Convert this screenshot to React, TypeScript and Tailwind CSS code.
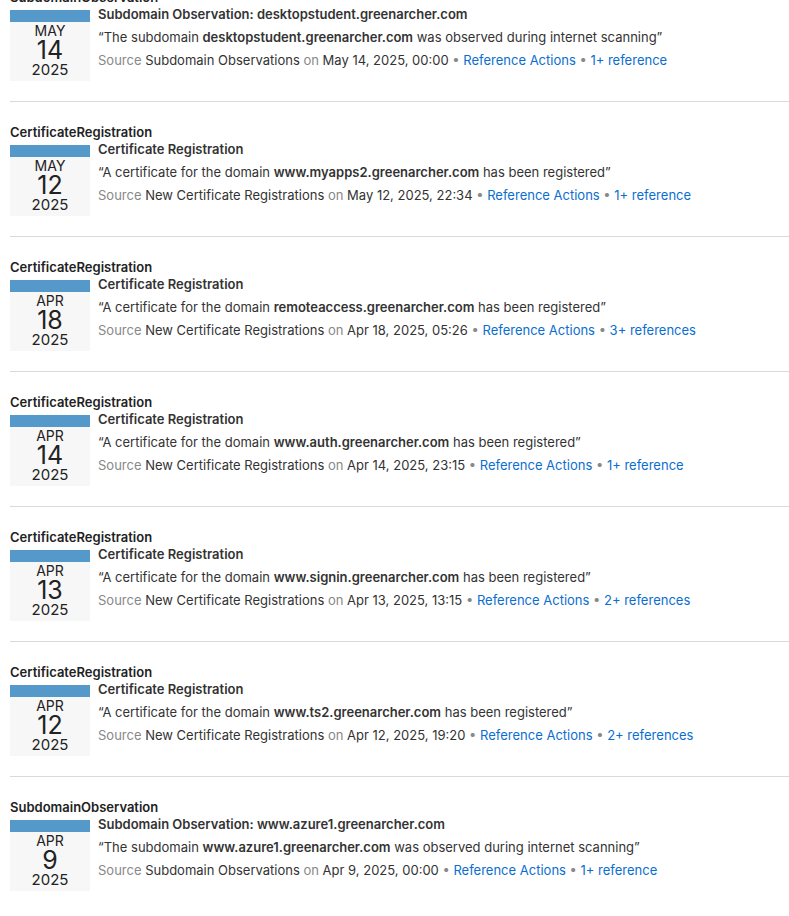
import React from "react";

type Item = {
  kind: "SubdomainObservation" | "CertificateRegistration";
  month: string;
  day: string;
  domain: string;
  date: string;
  refs: string;
};

const ITEMS: Item[] = [
  { kind: "SubdomainObservation", month: "MAY", day: "14", domain: "desktopstudent.greenarcher.com", date: "May 14, 2025, 00:00", refs: "1+ reference" },
  { kind: "CertificateRegistration", month: "MAY", day: "12", domain: "www.myapps2.greenarcher.com", date: "May 12, 2025, 22:34", refs: "1+ reference" },
  { kind: "CertificateRegistration", month: "APR", day: "18", domain: "remoteaccess.greenarcher.com", date: "Apr 18, 2025, 05:26", refs: "3+ references" },
  { kind: "CertificateRegistration", month: "APR", day: "14", domain: "www.auth.greenarcher.com", date: "Apr 14, 2025, 23:15", refs: "1+ reference" },
  { kind: "CertificateRegistration", month: "APR", day: "13", domain: "www.signin.greenarcher.com", date: "Apr 13, 2025, 13:15", refs: "2+ references" },
  { kind: "CertificateRegistration", month: "APR", day: "12", domain: "www.ts2.greenarcher.com", date: "Apr 12, 2025, 19:20", refs: "2+ references" },
  { kind: "SubdomainObservation", month: "APR", day: "9", domain: "www.azure1.greenarcher.com", date: "Apr 9, 2025, 00:00", refs: "1+ reference" },
];

function CalendarBadge({ month, day }: { month: string; day: string }) {
  return (
    <div className="flex w-[80px] shrink-0 flex-col">
      <div className="h-[12px] bg-[#5499c9]" />
      <div className="flex h-[59px] flex-col items-center bg-[#f7f7f7] pt-px text-[#222]">
        <span className="text-[14px] leading-[15px]">{month}</span>
        <span className="text-[25px] leading-[24px]">{day}</span>
        <span className="text-[15px] leading-[16px]">2025</span>
      </div>
    </div>
  );
}

function Entry({ item }: { item: Item }) {
  const isSub = item.kind === "SubdomainObservation";
  return (
    <section className="border-t border-[#d9d9d9] pt-[22px] pb-[20px]">
      <h3 className="text-[13px] leading-[16px] font-semibold text-[#222]">{item.kind}</h3>
      <div className="mt-[5px] flex gap-2">
        <CalendarBadge month={item.month} day={item.day} />
        <div className="-mt-[7px] flex flex-col text-[13px] leading-[23px] text-[#333]">
          <p className="font-semibold">
            {isSub ? `Subdomain Observation: ${item.domain}` : "Certificate Registration"}
          </p>
          <p>
            {isSub ? (
              <>
                “The subdomain <b className="font-semibold">{item.domain}</b> was observed during internet scanning”
              </>
            ) : (
              <>
                “A certificate for the domain <b className="font-semibold">{item.domain}</b> has been registered”
              </>
            )}
          </p>
          <p>
            <span className="text-[#888]">Source</span>{" "}
            {isSub ? "Subdomain Observations" : "New Certificate Registrations"}{" "}
            <span className="text-[#888]">on</span> {item.date}{" "}
            <span className="text-[#888]">•</span>{" "}
            <a className="text-[#0a6ed1]">Reference Actions</a>{" "}
            <span className="text-[#888]">•</span>{" "}
            <a className="text-[#0a6ed1]">{item.refs}</a>
          </p>
        </div>
      </div>
    </section>
  );
}

export default function App() {
  return (
    <div
      className="h-[916px] overflow-hidden bg-white pl-[10px]"
      style={{ fontFamily: "Inter, 'Noto Sans', sans-serif" }}
    >
      <div className="-mt-[34px]">
        {ITEMS.map((item, i) => (
          <Entry key={i} item={item} />
        ))}
      </div>
    </div>
  );
}
